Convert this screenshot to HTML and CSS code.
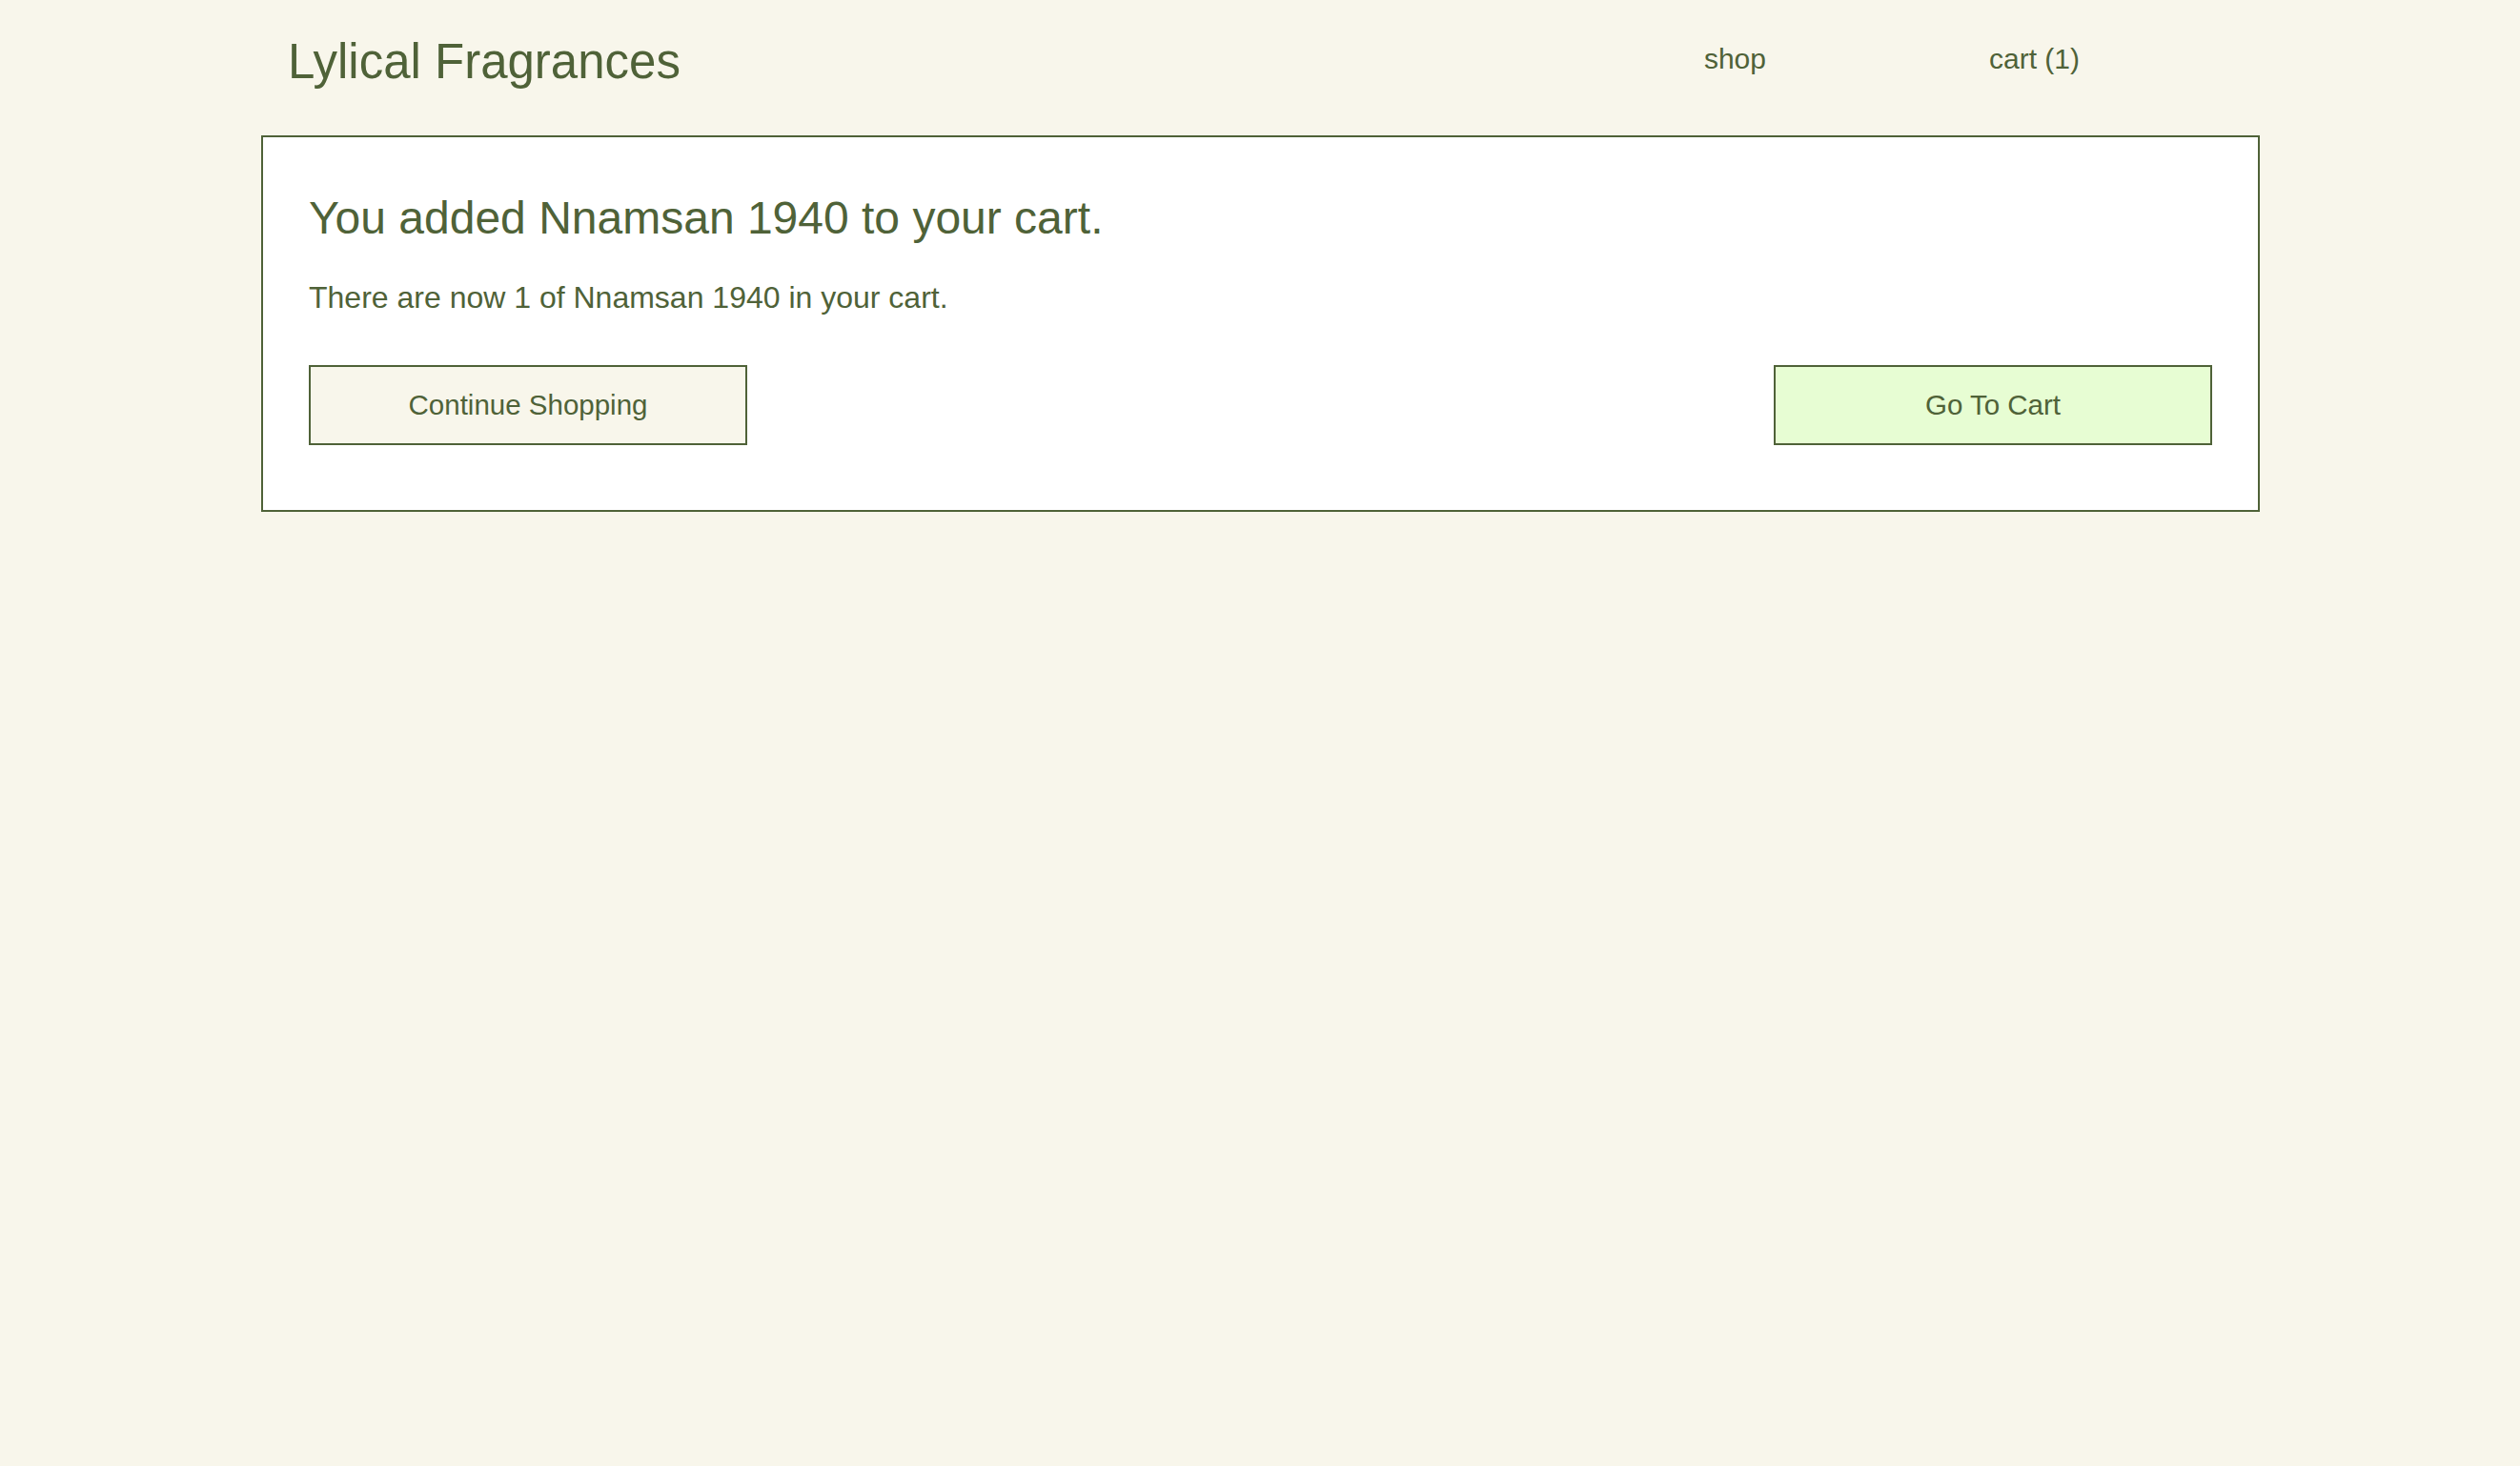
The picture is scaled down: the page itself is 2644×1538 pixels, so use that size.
FILE: index.html
```html
<!DOCTYPE html>
<html lang="en">
<head>
<meta charset="utf-8">
<title>Lylical Fragrances</title>
<link rel="stylesheet" href="styles.css">
</head>
<body>
<div class="page">
  <header class="site-header">
    <a class="logo" href="#">Lylical Fragrances</a>
    <nav class="nav">
      <a class="nav-link" href="#">shop</a>
      <a class="nav-link" href="#">cart (1)</a>
    </nav>
  </header>
  <main class="card">
    <h1 class="card-title">You added Nnamsan 1940 to your cart.</h1>
    <p class="card-text">There are now 1 of Nnamsan 1940 in your cart.</p>
    <div class="actions">
      <a class="btn btn-secondary" href="#">Continue Shopping</a>
      <a class="btn btn-primary" href="#">Go To Cart</a>
    </div>
  </main>
</div>
</body>
</html>
```

FILE: styles.css
```css
* {
  box-sizing: border-box;
}

html, body {
  margin: 0;
  padding: 0;
}

body {
  background: #f8f6eb;
  color: #4f6238;
  font-family: "Liberation Sans", Arial, sans-serif;
  min-height: 1538px;
}

a {
  color: inherit;
  text-decoration: none;
}

.page {
  width: 2098px;
  margin: 0 auto;
  padding-left: 1px;
}

.site-header {
  display: flex;
  align-items: center;
  justify-content: space-between;
  padding: 36px 189px 48px 28px;
}

.logo {
  font-size: 51px;
  line-height: 58px;
  white-space: nowrap;
}

.nav {
  display: flex;
  gap: 234px;
  padding-bottom: 6px;
}

.nav-link {
  font-size: 30px;
  line-height: 36px;
}

.card {
  background: #ffffff;
  border: 2px solid #4f6238;
  padding: 50px 48px 68px 48px;
}

.card-title {
  margin: 0 0 24px 0;
  font-weight: 400;
  font-size: 48px;
  line-height: 70px;
}

.card-text {
  margin: 0 0 47px 0;
  font-size: 32px;
  line-height: 48px;
}

.actions {
  display: flex;
  justify-content: space-between;
}

.btn {
  display: flex;
  align-items: center;
  justify-content: center;
  width: 460px;
  height: 84px;
  border: 2px solid #4f6238;
  font-size: 29.5px;
  line-height: 34px;
}

.btn-secondary {
  background: #f8f6eb;
}

.btn-primary {
  background: #e7fdd3;
}
```
